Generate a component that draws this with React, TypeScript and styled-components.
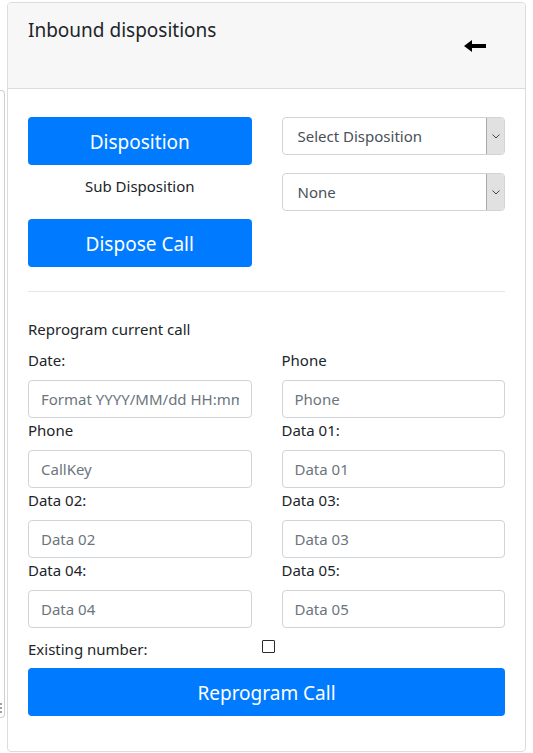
import React from 'react';
import styled, { createGlobalStyle } from 'styled-components';

const GlobalStyle = createGlobalStyle`
    html, body {
        margin: 0;
        padding: 0;
        background: #ffffff;
    }
    body {
        font-family: "Segoe UI", "Noto Sans", "Open Sans", sans-serif;
        color: #212529;
    }
    * {
        box-sizing: border-box;
    }
`;

const fields = [
    { id: 1, label: 'Date:', placeholder: 'Format YYYY/MM/dd HH:mm' },
    { id: 2, label: 'Phone', placeholder: 'Phone' },
    { id: 3, label: 'Phone', placeholder: 'CallKey' },
    { id: 4, label: 'Data 01:', placeholder: 'Data 01' },
    { id: 5, label: 'Data 02:', placeholder: 'Data 02' },
    { id: 6, label: 'Data 03:', placeholder: 'Data 03' },
    { id: 7, label: 'Data 04:', placeholder: 'Data 04' },
    { id: 8, label: 'Data 05:', placeholder: 'Data 05' },
];

const ArrowLeft = () => (
    <svg width="22" height="12" viewBox="0 0 22 12">
        <polygon points="0,6 8,0 8,4 22,4 22,8 8,8 8,12" fill="#000" />
    </svg>
);

const Chevron = () => (
    <svg width="8" height="5" viewBox="0 0 8 5">
        <polyline points="0.5,0.5 4,4 7.5,0.5" fill="none" stroke="#444" strokeWidth="1" />
    </svg>
);

// resize grip dots of the panel peeking in at the left
const GripDots = () => (
    <svg width="3" height="10" viewBox="0 0 3 10">
        <rect x="0" y="0" width="2" height="2" fill="#a0a0a0" />
        <rect x="0" y="4" width="2" height="2" fill="#a0a0a0" />
        <rect x="0" y="8" width="2" height="2" fill="#a0a0a0" />
    </svg>
);

const DropDown = ({ value }: { value: string }) => (
    <SelectBox>
        <Select defaultValue={value}>
            <option>{value}</option>
        </Select>
        <SelectArrow>
            <Chevron />
        </SelectArrow>
    </SelectBox>
);

export default function App() {
    return (
        <>
            <GlobalStyle />
            <Page>
                <SidePanel>
                    <Grip>
                        <GripDots />
                    </Grip>
                </SidePanel>
                <Card>
                    <CardHeader>
                        <Title>Inbound dispositions</Title>
                        <BackButton aria-label="back">
                            <ArrowLeft />
                        </BackButton>
                    </CardHeader>
                    <CardBody>
                        <TopGrid>
                            <Column>
                                <PrimaryButton>Disposition</PrimaryButton>
                                <SubLabel>Sub Disposition</SubLabel>
                                <PrimaryButton>Dispose Call</PrimaryButton>
                            </Column>
                            <SelectColumn>
                                <DropDown value="Select Disposition" />
                                <DropDown value="None" />
                            </SelectColumn>
                        </TopGrid>

                        <Divider />

                        <SectionTitle>Reprogram current call</SectionTitle>
                        <FormGrid>
                            {fields.map((field) => (
                                <Field key={field.id}>
                                    <Label>{field.label}</Label>
                                    <Input placeholder={field.placeholder} />
                                </Field>
                            ))}
                        </FormGrid>

                        <CheckRow>
                            <CheckLabel>Existing number:</CheckLabel>
                            <Checkbox type="checkbox" />
                        </CheckRow>

                        <WideButton>Reprogram Call</WideButton>
                    </CardBody>
                </Card>
            </Page>
        </>
    );
}

const Page = styled.div`
    display: flex;
    align-items: flex-start;
    gap: 2px;
    padding-top: 2px;
`;

const SidePanel = styled.div`
    position: relative;
    width: 5px;
    height: 628px;
    margin-top: 88px;
    border: 1px solid #cfcfcf;
    border-left: none;
    border-radius: 0 4px 4px 0;
`;

const Grip = styled.span`
    position: absolute;
    left: 0;
    bottom: 4px;
    display: flex;
`;

const Card = styled.div`
    width: 519px;
    border: 1px solid #dcdcdc;
    border-radius: 4px;
    background: #ffffff;
    overflow: hidden;
`;

const CardHeader = styled.div`
    display: flex;
    justify-content: space-between;
    align-items: flex-start;
    height: 86px;
    padding: 15px 39px 0 20px;
    background: #f7f7f7;
    border-bottom: 1px solid #dcdcdc;
`;

const Title = styled.h5`
    margin: 0;
    font-size: 19px;
    font-weight: 400;
    line-height: 24px;
    color: #212529;
`;

const BackButton = styled.span`
    display: flex;
    margin-top: 22px;
`;

const CardBody = styled.div`
    padding: 28px 20px 35px;
`;

const TopGrid = styled.div`
    display: grid;
    grid-template-columns: 1fr 1fr;
    column-gap: 30px;
`;

const Column = styled.div`
    display: flex;
    flex-direction: column;
`;

const SelectColumn = styled.div`
    display: flex;
    flex-direction: column;
    gap: 18px;
`;

const PrimaryButton = styled.button`
    height: 48px;
    width: 100%;
    padding: 2px 0 0;
    border: none;
    border-radius: 4px;
    background: #007bff;
    color: #ffffff;
    font-family: inherit;
    font-size: 19px;
    cursor: pointer;
`;

const WideButton = styled(PrimaryButton)`
    margin-top: 7px;
`;

const SubLabel = styled.p`
    margin: 9px 0 21px;
    text-align: center;
    font-size: 15px;
    line-height: 24px;
`;

const SelectBox = styled.div`
    display: flex;
    height: 38px;
    border: 1px solid #ced4da;
    border-radius: 4px;
    background: #ffffff;
    overflow: hidden;
`;

const Select = styled.select`
    flex: 1;
    min-width: 0;
    border: none;
    outline: none;
    appearance: none;
    background: transparent;
    padding: 0 0 0 15px;
    font-family: inherit;
    font-size: 15px;
    color: #495057;
`;

const SelectArrow = styled.div`
    display: flex;
    align-items: center;
    justify-content: center;
    width: 18px;
    background: #e1e1e1;
    border-left: 1px solid #a9a9a9;
    border-radius: 0 3px 3px 0;
`;

const Divider = styled.hr`
    margin: 24px 0 25px;
    border: none;
    border-top: 1px solid #e6e6e6;
`;

const SectionTitle = styled.p`
    margin: 0 0 7px;
    font-size: 15px;
    line-height: 24px;
`;

const FormGrid = styled.div`
    display: grid;
    grid-template-columns: 1fr 1fr;
    column-gap: 30px;
`;

const Field = styled.div`
    display: flex;
    flex-direction: column;
`;

const Label = styled.label`
    margin-bottom: 8px;
    font-size: 15px;
    line-height: 24px;
`;

const Input = styled.input`
    height: 38px;
    width: 100%;
    padding: 0 12px;
    border: 1px solid #ced4da;
    border-radius: 4px;
    font-family: inherit;
    font-size: 15px;
    color: #495057;
    outline: none;

    &::placeholder {
        color: #6c757d;
    }
`;

const CheckRow = styled.div`
    display: flex;
    align-items: center;
    margin-top: 9px;
    height: 24px;
`;

const CheckLabel = styled.span`
    flex: 0 0 234px;
    font-size: 15px;
    line-height: 24px;
`;

const Checkbox = styled.input`
    appearance: none;
    width: 13px;
    height: 13px;
    margin: -5px 0 0;
    border: 1.5px solid #2b2b2b;
    border-radius: 1px;
    background: #ffffff;
`;
